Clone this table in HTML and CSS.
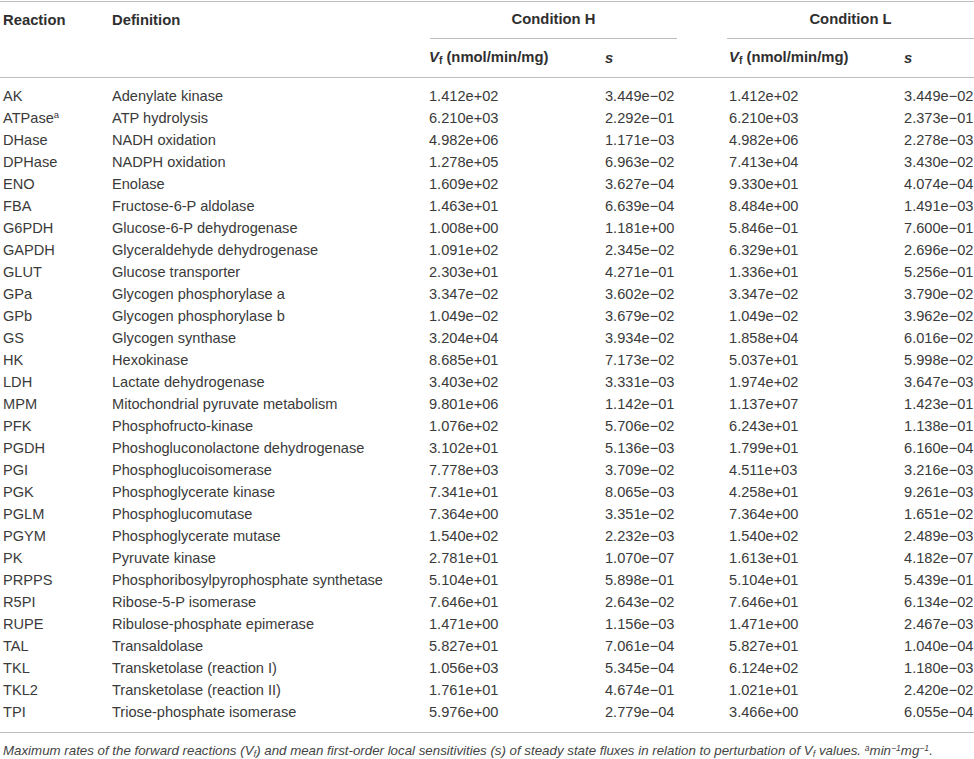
FILE: index.html
```html
<!DOCTYPE html>
<html lang="en">

<head>
  <meta charset="utf-8">
  <link rel="stylesheet" href="styles.css">
</head>

<body>
  <div class="table-wrap">
    <table class="rates">
      <colgroup>
        <col class="c-reaction">
        <col class="c-definition">
        <col class="c-vf-h">
        <col class="c-s-h">
        <col class="c-vf-l">
        <col class="c-s-l">
      </colgroup>
      <thead>
        <tr class="head-top">
          <th>Reaction</th>
          <th>Definition</th>
          <th colspan="2" class="cond"><div class="cond-h">Condition H</div></th>
          <th colspan="2" class="cond"><div class="cond-l">Condition L</div></th>
        </tr>
        <tr class="head-sub">
          <th></th>
          <th></th>
          <th><i>V</i><sub>f</sub> (nmol/min/mg)</th>
          <th><i>s</i></th>
          <th><i>V</i><sub>f</sub> (nmol/min/mg)</th>
          <th><i>s</i></th>
        </tr>
      </thead>
      <tbody id="rows"></tbody>
    </table>

    <p class="note">Maximum rates of the forward reactions (<i>V</i><sub>f</sub>) and mean first-order local sensitivities (s) of steady state fluxes in relation to perturbation of <i>V</i><sub>f</sub> values. <sup>a</sup>min<sup>−1</sup>mg<sup>−1</sup>.</p>
  </div>

  <script>
    const data = [
      ['AK', 'Adenylate kinase', '1.412e+02', '3.449e−02', '1.412e+02', '3.449e−02'],
      ['ATPase<sup>a</sup>', 'ATP hydrolysis', '6.210e+03', '2.292e−01', '6.210e+03', '2.373e−01'],
      ['DHase', 'NADH oxidation', '4.982e+06', '1.171e−03', '4.982e+06', '2.278e−03'],
      ['DPHase', 'NADPH oxidation', '1.278e+05', '6.963e−02', '7.413e+04', '3.430e−02'],
      ['ENO', 'Enolase', '1.609e+02', '3.627e−04', '9.330e+01', '4.074e−04'],
      ['FBA', 'Fructose-6-P aldolase', '1.463e+01', '6.639e−04', '8.484e+00', '1.491e−03'],
      ['G6PDH', 'Glucose-6-P dehydrogenase', '1.008e+00', '1.181e+00', '5.846e−01', '7.600e−01'],
      ['GAPDH', 'Glyceraldehyde dehydrogenase', '1.091e+02', '2.345e−02', '6.329e+01', '2.696e−02'],
      ['GLUT', 'Glucose transporter', '2.303e+01', '4.271e−01', '1.336e+01', '5.256e−01'],
      ['GPa', 'Glycogen phosphorylase a', '3.347e−02', '3.602e−02', '3.347e−02', '3.790e−02'],
      ['GPb', 'Glycogen phosphorylase b', '1.049e−02', '3.679e−02', '1.049e−02', '3.962e−02'],
      ['GS', 'Glycogen synthase', '3.204e+04', '3.934e−02', '1.858e+04', '6.016e−02'],
      ['HK', 'Hexokinase', '8.685e+01', '7.173e−02', '5.037e+01', '5.998e−02'],
      ['LDH', 'Lactate dehydrogenase', '3.403e+02', '3.331e−03', '1.974e+02', '3.647e−03'],
      ['MPM', 'Mitochondrial pyruvate metabolism', '9.801e+06', '1.142e−01', '1.137e+07', '1.423e−01'],
      ['PFK', 'Phosphofructo-kinase', '1.076e+02', '5.706e−02', '6.243e+01', '1.138e−01'],
      ['PGDH', 'Phoshogluconolactone dehydrogenase', '3.102e+01', '5.136e−03', '1.799e+01', '6.160e−04'],
      ['PGI', 'Phosphoglucoisomerase', '7.778e+03', '3.709e−02', '4.511e+03', '3.216e−03'],
      ['PGK', 'Phosphoglycerate kinase', '7.341e+01', '8.065e−03', '4.258e+01', '9.261e−03'],
      ['PGLM', 'Phosphoglucomutase', '7.364e+00', '3.351e−02', '7.364e+00', '1.651e−02'],
      ['PGYM', 'Phosphoglycerate mutase', '1.540e+02', '2.232e−03', '1.540e+02', '2.489e−03'],
      ['PK', 'Pyruvate kinase', '2.781e+01', '1.070e−07', '1.613e+01', '4.182e−07'],
      ['PRPPS', 'Phosphoribosylpyrophosphate synthetase', '5.104e+01', '5.898e−01', '5.104e+01', '5.439e−01'],
      ['R5PI', 'Ribose-5-P isomerase', '7.646e+01', '2.643e−02', '7.646e+01', '6.134e−02'],
      ['RUPE', 'Ribulose-phosphate epimerase', '1.471e+00', '1.156e−03', '1.471e+00', '2.467e−03'],
      ['TAL', 'Transaldolase', '5.827e+01', '7.061e−04', '5.827e+01', '1.040e−04'],
      ['TKL', 'Transketolase (reaction I)', '1.056e+03', '5.345e−04', '6.124e+02', '1.180e−03'],
      ['TKL2', 'Transketolase (reaction II)', '1.761e+01', '4.674e−01', '1.021e+01', '2.420e−02'],
      ['TPI', 'Triose-phosphate isomerase', '5.976e+00', '2.779e−04', '3.466e+00', '6.055e−04']
    ];

    const tbody = document.getElementById('rows');

    data.forEach(row => {
      const tr = document.createElement('tr');
      row.forEach(cell => {
        const td = document.createElement('td');
        td.innerHTML = cell;
        tr.appendChild(td);
      });
      tbody.appendChild(tr);
    });
  </script>
</body>

</html>
```

FILE: styles.css
```css
html,
body {
  margin: 0;
  padding: 0;
  background: #fff;
  font-family: "Liberation Sans", Arial, sans-serif;
  color: #3a3a3a;
}

.table-wrap {
  width: 974px;
  padding-top: 1px;
}

.rates {
  width: 974px;
  border-collapse: collapse;
  table-layout: fixed;
  font-size: 14.6px;
  border-top: 1px solid #bdbdbd;
  border-bottom: 1px solid #bdbdbd;
}

.c-reaction { width: 109px; }
.c-definition { width: 317px; }
.c-vf-h { width: 176px; }
.c-s-h { width: 124px; }
.c-vf-l { width: 175px; }
.c-s-l { width: 73px; }

th,
td {
  text-align: left;
  padding: 0 3px;
  white-space: nowrap;
  vertical-align: middle;
}

th {
  font-weight: bold;
  font-size: 14.8px;
  color: #2f2f2f;
}

.head-top th {
  height: 34px;
  padding-bottom: 2px;
}

.head-top th.cond {
  padding: 0;
  vertical-align: top;
}

.cond-h,
.cond-l {
  height: 36px;
  line-height: 34px;
  text-align: center;
  border-bottom: 1px solid #bdbdbd;
}

.cond-h {
  margin: 0 49px 0 4px;
}

.cond-l {
  margin-left: 1px;
}

.head-sub th {
  height: 38px;
  border-bottom: 1px solid #bdbdbd;
}

sub {
  font-size: 0.7em;
  vertical-align: -0.2em;
}

sup {
  font-size: 0.65em;
  vertical-align: 0.5em;
  line-height: 0;
}

tbody tr td {
  height: 22px;
  line-height: 22px;
}

tbody tr:first-child td {
  padding-top: 7px;
}

tbody tr:last-child td {
  padding-bottom: 9px;
}

.note {
  margin: 10px 0 0 3px;
  font-size: 13.3px;
  font-style: italic;
  color: #444;
  white-space: nowrap;
}
```
